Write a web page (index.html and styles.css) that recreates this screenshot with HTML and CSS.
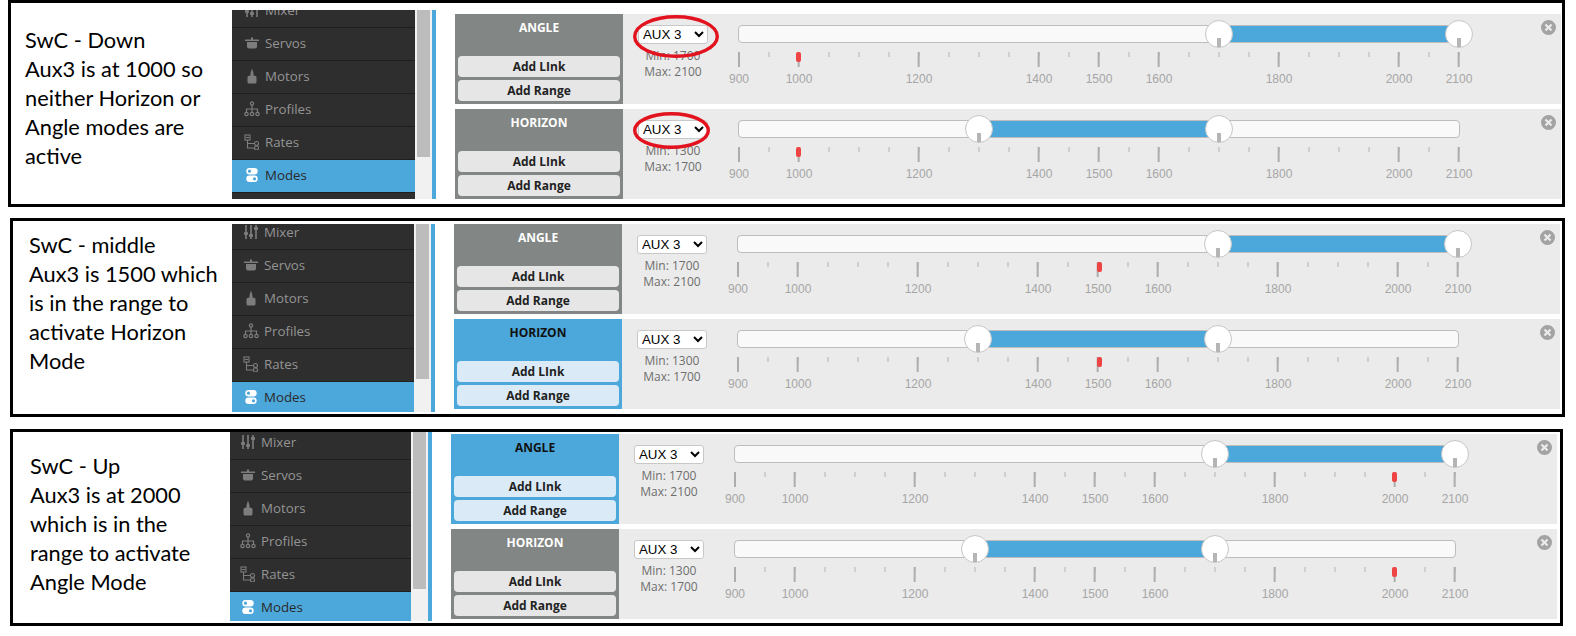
FILE: index.html
```html
<!DOCTYPE html>
<html lang="en">
<head>
  <meta charset="UTF-8">
  <title>Angle and Horizon modes on AUX 3</title>
  <link rel="stylesheet" href="styles.css">
</head>
<body>
  <svg class="sprite" xmlns="http://www.w3.org/2000/svg">
    <symbol id="i-mixer" viewBox="0 0 16 16">
      <path d="M3 1v14M8 1v14M13 1v14" fill="none" stroke="currentColor" stroke-width="1.6"/>
      <rect x="1" y="8" width="4" height="3" rx="1"/><rect x="6" y="10" width="4" height="3" rx="1"/><rect x="11" y="3" width="4" height="3" rx="1"/>
    </symbol>
    <symbol id="i-servo" viewBox="0 0 16 16">
      <path d="M7 2.500h2v2h5.500a.7.7 0 0 1 0 1.500H1.500a.7.7 0 0 1 0-1.500H7zM3 7h10v4.500a2 2 0 0 1-2 2H5a2 2 0 0 1-2-2z"/>
    </symbol>
    <symbol id="i-motor" viewBox="0 0 16 16">
      <path d="M8 0.500l1.300 4 .4 3.200h1.300a1.500 1.500 0 0 1 1.500 1.500V14a1.500 1.500 0 0 1-1.500 1.500H5A1.500 1.500 0 0 1 3.500 14V9.200A1.500 1.500 0 0 1 5 7.700h1.300l.4-3.200z"/>
    </symbol>
    <symbol id="i-profile" viewBox="0 0 16 16">
      <g fill="none" stroke="currentColor" stroke-width="1.200"><circle cx="8" cy="2.500" r="1.600"/><circle cx="2.500" cy="13" r="1.700"/><circle cx="8" cy="13" r="1.700"/><circle cx="13.500" cy="13" r="1.700"/><path d="M8 4v7.300M2.500 11.300V8h11v3.300"/></g>
    </symbol>
    <symbol id="i-rate" viewBox="0 0 16 16">
      <g fill="none" stroke="currentColor" stroke-width="1.100"><rect x="1" y="1" width="5" height="5"/><path d="M1.800 3.500h3.400M3.500 6v8h7M3.500 9.500h7"/><circle cx="12.500" cy="9.500" r="2"/><circle cx="12.500" cy="14" r="2"/></g>
    </symbol>
    <symbol id="i-mode" viewBox="0 0 16 16">
      <path fill-rule="evenodd" d="M5.500 1h5a3.200 3.200 0 0 1 0 6.400h-5a3.200 3.200 0 0 1 0-6.400zm0 1.600a1.600 1.600 0 1 0 0 3.200 1.600 1.600 0 0 0 0-3.200zM5.500 8.600h5a3.200 3.200 0 0 1 0 6.400h-5a3.200 3.200 0 0 1 0-6.400zm5 1.600a1.600 1.600 0 1 0 0 3.200 1.600 1.600 0 0 0 0-3.200z"/>
    </symbol>
    <symbol id="i-close" viewBox="0 0 15 15">
      <path fill-rule="evenodd" d="M7.500 0a7.500 7.500 0 1 1 0 15 7.500 7.500 0 0 1 0-15zM5.300 3.700L3.700 5.300l2.200 2.200-2.200 2.200 1.600 1.600 2.200-2.200 2.200 2.200 1.600-1.600-2.200-2.200 2.200-2.200-1.600-1.600-2.200 2.200z"/>
    </symbol>
  </svg>

  <!-- Switch down -->
  <section class="panel panel-down">
    <div class="note">SwC - Down<br>Aux3 is at 1000 so<br>neither Horizon or<br>Angle modes are<br>active</div>
    <nav class="nav">
      <ul class="nav-list">
        <li class="nav-item"><svg class="nav-icon"><use href="#i-mixer"/></svg>Mixer</li>
        <li class="nav-item"><svg class="nav-icon"><use href="#i-servo"/></svg>Servos</li>
        <li class="nav-item"><svg class="nav-icon"><use href="#i-motor"/></svg>Motors</li>
        <li class="nav-item"><svg class="nav-icon"><use href="#i-profile"/></svg>Profiles</li>
        <li class="nav-item"><svg class="nav-icon"><use href="#i-rate"/></svg>Rates</li>
        <li class="nav-item active"><svg class="nav-icon"><use href="#i-mode"/></svg>Modes</li>
      </ul>
    </nav>
    <div class="scrollbar"><div class="thumb"></div></div>
    <div class="rail"></div>
    <div class="rows">
      <div class="row">
        <div class="mode"><div class="mode-name">ANGLE</div><button class="add">Add LInk</button><button class="add">Add Range</button></div>
        <div class="setup">
          <div class="aux">
            <select class="aux-select"><option>AUX 3</option></select>
            <div class="limits">Min: 1700<br>Max: 2100</div>
            <svg class="ring ring-wide" viewBox="0 0 86 43"><ellipse cx="43" cy="21.500" rx="41.300" ry="19.800"/></svg>
          </div>
          <div class="slider">
            <div class="track"><div class="fill" style="left:480px;width:240px"></div><span class="handle at-1700"></span><span class="handle at-2100"></span></div>
            <div class="scale">
              <span class="now at-1000"></span>
              <span class="pip at-900">900</span><span class="pip at-1000">1000</span><span class="pip at-1200">1200</span><span class="pip at-1400">1400</span><span class="pip at-1500">1500</span><span class="pip at-1600">1600</span><span class="pip at-1800">1800</span><span class="pip at-2000">2000</span><span class="pip at-2100">2100</span>
            </div>
          </div>
          <svg class="close"><use href="#i-close"/></svg>
        </div>
      </div>
      <div class="row">
        <div class="mode"><div class="mode-name">HORIZON</div><button class="add">Add LInk</button><button class="add">Add Range</button></div>
        <div class="setup">
          <div class="aux">
            <select class="aux-select"><option>AUX 3</option></select>
            <div class="limits">Min: 1300<br>Max: 1700</div>
            <svg class="ring ring-narrow" viewBox="0 0 77 37"><ellipse cx="38.500" cy="18.500" rx="36.800" ry="16.800"/></svg>
          </div>
          <div class="slider">
            <div class="track"><div class="fill" style="left:240px;width:240px"></div><span class="handle at-1300"></span><span class="handle at-1700"></span></div>
            <div class="scale">
              <span class="now at-1000"></span>
              <span class="pip at-900">900</span><span class="pip at-1000">1000</span><span class="pip at-1200">1200</span><span class="pip at-1400">1400</span><span class="pip at-1500">1500</span><span class="pip at-1600">1600</span><span class="pip at-1800">1800</span><span class="pip at-2000">2000</span><span class="pip at-2100">2100</span>
            </div>
          </div>
          <svg class="close"><use href="#i-close"/></svg>
        </div>
      </div>
    </div>
  </section>

  <!-- Switch middle -->
  <section class="panel panel-middle">
    <div class="note">SwC - middle<br>Aux3 is 1500 which<br>is in the range to<br>activate Horizon<br>Mode</div>
    <nav class="nav">
      <ul class="nav-list">
        <li class="nav-item"><svg class="nav-icon"><use href="#i-mixer"/></svg>Mixer</li>
        <li class="nav-item"><svg class="nav-icon"><use href="#i-servo"/></svg>Servos</li>
        <li class="nav-item"><svg class="nav-icon"><use href="#i-motor"/></svg>Motors</li>
        <li class="nav-item"><svg class="nav-icon"><use href="#i-profile"/></svg>Profiles</li>
        <li class="nav-item"><svg class="nav-icon"><use href="#i-rate"/></svg>Rates</li>
        <li class="nav-item active"><svg class="nav-icon"><use href="#i-mode"/></svg>Modes</li>
      </ul>
    </nav>
    <div class="scrollbar"><div class="thumb"></div></div>
    <div class="rail"></div>
    <div class="rows">
      <div class="row">
        <div class="mode"><div class="mode-name">ANGLE</div><button class="add">Add LInk</button><button class="add">Add Range</button></div>
        <div class="setup">
          <div class="aux">
            <select class="aux-select"><option>AUX 3</option></select>
            <div class="limits">Min: 1700<br>Max: 2100</div>
          </div>
          <div class="slider">
            <div class="track"><div class="fill" style="left:480px;width:240px"></div><span class="handle at-1700"></span><span class="handle at-2100"></span></div>
            <div class="scale">
              <span class="now at-1500"></span>
              <span class="pip at-900">900</span><span class="pip at-1000">1000</span><span class="pip at-1200">1200</span><span class="pip at-1400">1400</span><span class="pip at-1500">1500</span><span class="pip at-1600">1600</span><span class="pip at-1800">1800</span><span class="pip at-2000">2000</span><span class="pip at-2100">2100</span>
            </div>
          </div>
          <svg class="close"><use href="#i-close"/></svg>
        </div>
      </div>
      <div class="row on">
        <div class="mode"><div class="mode-name">HORIZON</div><button class="add">Add LInk</button><button class="add">Add Range</button></div>
        <div class="setup">
          <div class="aux">
            <select class="aux-select"><option>AUX 3</option></select>
            <div class="limits">Min: 1300<br>Max: 1700</div>
          </div>
          <div class="slider">
            <div class="track"><div class="fill" style="left:240px;width:240px"></div><span class="handle at-1300"></span><span class="handle at-1700"></span></div>
            <div class="scale">
              <span class="now at-1500"></span>
              <span class="pip at-900">900</span><span class="pip at-1000">1000</span><span class="pip at-1200">1200</span><span class="pip at-1400">1400</span><span class="pip at-1500">1500</span><span class="pip at-1600">1600</span><span class="pip at-1800">1800</span><span class="pip at-2000">2000</span><span class="pip at-2100">2100</span>
            </div>
          </div>
          <svg class="close"><use href="#i-close"/></svg>
        </div>
      </div>
    </div>
  </section>

  <!-- Switch up -->
  <section class="panel panel-up">
    <div class="note">SwC - Up<br>Aux3 is at 2000<br>which is in the<br>range to activate<br>Angle Mode</div>
    <nav class="nav">
      <ul class="nav-list">
        <li class="nav-item"><svg class="nav-icon"><use href="#i-mixer"/></svg>Mixer</li>
        <li class="nav-item"><svg class="nav-icon"><use href="#i-servo"/></svg>Servos</li>
        <li class="nav-item"><svg class="nav-icon"><use href="#i-motor"/></svg>Motors</li>
        <li class="nav-item"><svg class="nav-icon"><use href="#i-profile"/></svg>Profiles</li>
        <li class="nav-item"><svg class="nav-icon"><use href="#i-rate"/></svg>Rates</li>
        <li class="nav-item active"><svg class="nav-icon"><use href="#i-mode"/></svg>Modes</li>
      </ul>
    </nav>
    <div class="scrollbar"><div class="thumb"></div></div>
    <div class="rail"></div>
    <div class="rows">
      <div class="row on">
        <div class="mode"><div class="mode-name">ANGLE</div><button class="add">Add LInk</button><button class="add">Add Range</button></div>
        <div class="setup">
          <div class="aux">
            <select class="aux-select"><option>AUX 3</option></select>
            <div class="limits">Min: 1700<br>Max: 2100</div>
          </div>
          <div class="slider">
            <div class="track"><div class="fill" style="left:480px;width:240px"></div><span class="handle at-1700"></span><span class="handle at-2100"></span></div>
            <div class="scale">
              <span class="now at-2000"></span>
              <span class="pip at-900">900</span><span class="pip at-1000">1000</span><span class="pip at-1200">1200</span><span class="pip at-1400">1400</span><span class="pip at-1500">1500</span><span class="pip at-1600">1600</span><span class="pip at-1800">1800</span><span class="pip at-2000">2000</span><span class="pip at-2100">2100</span>
            </div>
          </div>
          <svg class="close"><use href="#i-close"/></svg>
        </div>
      </div>
      <div class="row">
        <div class="mode"><div class="mode-name">HORIZON</div><button class="add">Add LInk</button><button class="add">Add Range</button></div>
        <div class="setup">
          <div class="aux">
            <select class="aux-select"><option>AUX 3</option></select>
            <div class="limits">Min: 1300<br>Max: 1700</div>
          </div>
          <div class="slider">
            <div class="track"><div class="fill" style="left:240px;width:240px"></div><span class="handle at-1300"></span><span class="handle at-1700"></span></div>
            <div class="scale">
              <span class="now at-2000"></span>
              <span class="pip at-900">900</span><span class="pip at-1000">1000</span><span class="pip at-1200">1200</span><span class="pip at-1400">1400</span><span class="pip at-1500">1500</span><span class="pip at-1600">1600</span><span class="pip at-1800">1800</span><span class="pip at-2000">2000</span><span class="pip at-2100">2100</span>
            </div>
          </div>
          <svg class="close"><use href="#i-close"/></svg>
        </div>
      </div>
    </div>
  </section>
</body>
</html>
```

FILE: styles.css
```css
body {
  margin: 0;
  background: #fff;
  font-family: 'Open Sans', sans-serif;
  color: #222;
  overflow: hidden;
}

.sprite {
  display: none;
}

/* Each pasted screenshot has slightly different offsets */
.panel {
  display: flex;
  box-sizing: border-box;
  border: 3px solid #000;
}

.panel-down {
  width: 1557px;
  height: 207px;
  margin-left: 8px;
  padding: 7px 1px 5px 0;
  --note-w: 221px;
  --note-x: 14px;
  --note-y: 15px;
  --nav-w: 183px;
  --nav-x: 12px;
  --list-y: -15px;
  --thumb-h: 147px;
  --rows-y: 4px;
}

.panel-middle {
  width: 1555px;
  height: 199px;
  margin: 11px 0 0 10px;
  padding: 3px 2px 2px 0;
  --note-w: 219px;
  --note-x: 16px;
  --note-y: 6px;
  --nav-w: 182px;
  --nav-x: 11px;
  --list-y: -7px;
  --thumb-h: 155px;
  --rows-y: 0px;
}

.panel-up {
  width: 1553px;
  height: 197px;
  margin: 12px 0 0 10px;
  padding: 0 3px 2px 0;
  --note-w: 217px;
  --note-x: 17px;
  --note-y: 19px;
  --nav-w: 181px;
  --nav-x: 10px;
  --list-y: -5px;
  --thumb-h: 157px;
  --rows-y: 2px;
}

.note {
  box-sizing: border-box;
  flex: none;
  width: var(--note-w);
  padding: var(--note-y) 0 0 var(--note-x);
  font-family: 'Lato', sans-serif;
  font-size: 21.8px;
  line-height: 29px;
  white-space: nowrap;
  color: #000;
}

/* Sidebar */
.nav {
  flex: none;
  width: var(--nav-w);
  overflow: hidden;
  background: #2e2e2e;
}

.nav-list {
  margin: var(--list-y) 0 0;
  padding: 0;
  list-style: none;
}

.nav-item {
  display: flex;
  align-items: center;
  box-sizing: border-box;
  height: 33px;
  padding: 0 0 2px var(--nav-x);
  border-bottom: 1px solid #1f1f1f;
  font-size: 13.3px;
  color: #949494;
}

.nav-item.active {
  background: #4ca7da;
  color: #2b2b2b;
}

.nav-icon {
  flex: none;
  width: 16px;
  height: 16px;
  margin-right: 5px;
  fill: #7d7d7d;
  color: #7d7d7d;
}

.active .nav-icon {
  fill: #fff;
  color: #fff;
}

.scrollbar {
  flex: none;
  box-sizing: border-box;
  width: 17px;
  padding: 0 2px;
  background: #f1f1f1;
}

.thumb {
  height: var(--thumb-h);
  background: #bcbcbc;
}

.rail {
  flex: none;
  width: 4px;
  background: #4ca7da;
}

/* Mode rows */
.rows {
  flex: 1;
  margin: var(--rows-y) 0 0 19px;
}

.row {
  display: flex;
  height: 90px;
  margin-bottom: 5px;
}

.mode {
  flex: none;
  box-sizing: border-box;
  width: 168px;
  padding: 5px 3px 0;
  background: #828684;
  color: #fff;
}

.mode-name {
  height: 37px;
  font-size: 12px;
  font-weight: 700;
  line-height: 17px;
  text-align: center;
}

.add {
  display: block;
  width: 162px;
  height: 21px;
  margin: 0 0 3px;
  padding: 0;
  border: none;
  border-radius: 4px;
  background: #e6e6e6;
  font-family: 'Open Sans', sans-serif;
  font-size: 12px;
  font-weight: 700;
  color: #222;
}

.on .mode {
  background: #4ca7da;
  color: #111;
}

.on .add {
  background: #daebf7;
}

.setup {
  position: relative;
  display: flex;
  flex: 1;
  background: #ebebeb;
}

.aux {
  position: relative;
  flex: none;
  width: 70px;
  margin: 11px 0 0 15px;
  text-align: center;
}

.aux-select {
  display: block;
  box-sizing: border-box;
  width: 70px;
  height: 19px;
  padding: 0;
  border: 1px solid #c8c8c8;
  border-radius: 3px;
  background-color: #fff;
  font-family: 'Liberation Sans', sans-serif;
  font-size: 13.3px;
  color: #000;
}

.limits {
  margin-top: 4px;
  font-size: 12px;
  line-height: 16px;
  color: #6e6e6e;
}

.ring {
  position: absolute;
  left: -5px;
  fill: none;
  stroke: #e2131f;
  stroke-width: 3.4;
}

.ring-wide {
  top: -10px;
  width: 86px;
  height: 43px;
}

.ring-narrow {
  top: -8px;
  width: 77px;
  height: 37px;
}

/* Range slider, 0.6px per microsecond */
.slider {
  flex: none;
  width: 722px;
  margin: 11px 0 0 30px;
}

.track {
  position: relative;
  box-sizing: border-box;
  height: 18px;
  border: 1px solid #bdbdbd;
  border-radius: 4px;
  background: #f9f9f9;
}

.fill {
  position: absolute;
  top: 0;
  bottom: 0;
  background: #4ca7da;
}

.handle {
  position: absolute;
  top: -6px;
  box-sizing: border-box;
  width: 28px;
  height: 28px;
  margin-left: -14px;
  border: 1px solid #c6c6c6;
  border-radius: 50%;
  background: #fff;
}

.handle::after {
  content: "";
  position: absolute;
  left: 11px;
  bottom: 0;
  width: 4px;
  height: 9px;
  background: #b5b5b5;
}

.scale {
  position: relative;
  height: 34px;
  margin: 9px 0 0 1px;
}

.scale::before {
  content: "";
  position: absolute;
  top: 0;
  left: -1px;
  right: -1px;
  height: 5px;
  background: repeating-linear-gradient(90deg, #cfcfcf 0 2px, transparent 2px 30px);
}

.pip {
  position: absolute;
  top: 20px;
  font-family: 'Liberation Sans', sans-serif;
  font-size: 12px;
  line-height: 14px;
  color: #a6a6a6;
  transform: translateX(-50%);
}

.pip::before {
  content: "";
  position: absolute;
  top: -20px;
  left: 50%;
  width: 2px;
  height: 15px;
  margin-left: -1px;
  background: #adadad;
}

.now {
  position: absolute;
  z-index: 1;
  top: 0;
  width: 5px;
  height: 10px;
  margin-left: -3px;
  border-radius: 2px;
  background: #ef4444;
}

.panel-middle .now {
  margin-left: -1px;
}

.at-900 { left: 0; }
.at-1000 { left: 60px; }
.at-1200 { left: 180px; }
.at-1300 { left: 240px; }
.at-1400 { left: 300px; }
.at-1500 { left: 360px; }
.at-1600 { left: 420px; }
.at-1700 { left: 480px; }
.at-1800 { left: 540px; }
.at-2000 { left: 660px; }
.at-2100 { left: 720px; }

.close {
  position: absolute;
  top: 6px;
  right: 5px;
  width: 15px;
  height: 15px;
  fill: #a3a3a3;
}
```
